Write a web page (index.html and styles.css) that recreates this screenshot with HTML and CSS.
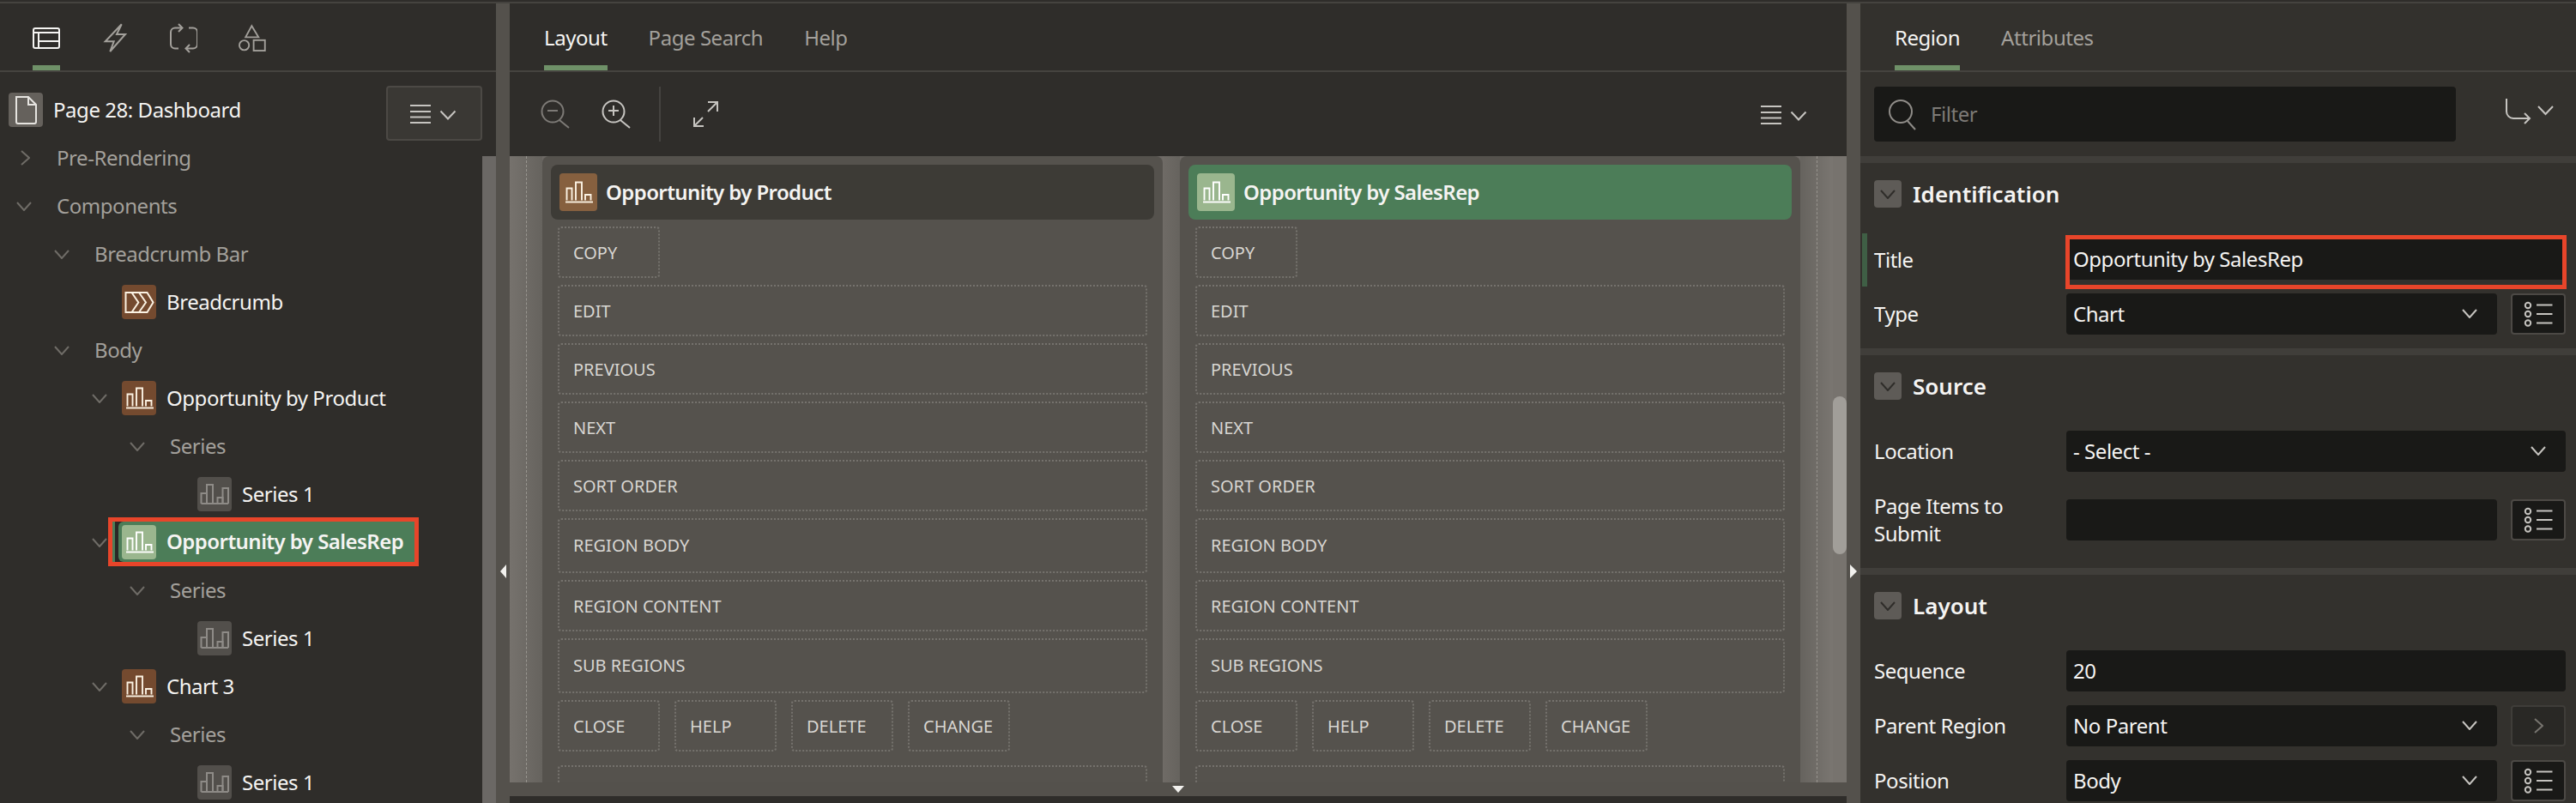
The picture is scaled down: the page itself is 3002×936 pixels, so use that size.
FILE: index.html
```html
<!DOCTYPE html>
<html lang="en">
<head>
  <meta charset="UTF-8" />
  <title>Page Designer</title>
  <link rel="stylesheet" href="styles.css">
</head>
<body>

  <svg class="sprites" width="0" height="0">
    <symbol id="chev-down" viewBox="0 0 18 11"><path d="M1 1l8 9 8-9" fill="none" stroke="currentColor" stroke-width="2"/></symbol>
    <symbol id="chev-right" viewBox="0 0 11 18"><path d="M1 1l9 8-9 8" fill="none" stroke="currentColor" stroke-width="2"/></symbol>
    <symbol id="chart" viewBox="0 0 40 40">
      <g fill="none" stroke="currentColor" stroke-width="1.9">
        <path d="M6.5 29.500V15.500H12.500V29.500"/>
        <path d="M17 29.500V8.500H24V29.500"/>
        <path d="M28 29.500V23H34.500V29.500"/>
        <path d="M5 31.500H37"/>
      </g>
    </symbol>
    <symbol id="series" viewBox="0 0 40 40">
      <g fill="none" stroke="currentColor" stroke-width="2">
        <path d="M4.500 31V19H11V31"/>
        <path d="M11 31V9H18V31"/>
        <path d="M23.500 31V24H29.500V31"/>
        <path d="M29.500 31V13H36V31"/>
        <path d="M4.500 31H36"/>
      </g>
    </symbol>
    <symbol id="menu" viewBox="0 0 56 40">
      <g fill="none" stroke="currentColor" stroke-width="2">
        <path d="M0 11H24M0 18H24M0 24.500H24M0 31H24"/>
        <path d="M35.500 17.500L44 26.500L52.500 17.500"/>
      </g>
    </symbol>
    <symbol id="list" viewBox="0 0 60 44">
      <g fill="none" stroke="currentColor" stroke-width="2">
        <circle cx="18" cy="12" r="3.200"/>
        <circle cx="18" cy="22" r="3.200"/>
        <circle cx="18" cy="32.500" r="3.200"/>
        <path d="M28 11.500H46.500M28 22H46.500M28 32.500H46.500"/>
      </g>
    </symbol>
  </svg>

  <div class="top-line"></div>

  <div class="designer">

    <!-- left: page tree -->
    <section class="pane">
      <div class="tabs tabs-left">
        <div class="tab-icon is-active">
          <svg width="32" height="40" viewBox="0 0 32 40" fill="none" stroke="currentColor" stroke-width="2">
            <rect x="1" y="9" width="30" height="23" rx="2"/>
            <path d="M1 14H31M7 14V32M7 24H31"/>
          </svg>
        </div>
        <div class="tab-icon">
          <svg width="32" height="40" viewBox="0 0 32 40" fill="none" stroke="currentColor" stroke-width="2">
            <path d="M23.700 4.300L4.700 24.300H14.700L10.300 36L28 16H18Z"/>
          </svg>
        </div>
        <div class="tab-icon">
          <svg width="32" height="40" viewBox="0 0 32 40" fill="none" stroke="currentColor" stroke-width="2">
            <path d="M14 8.500H6a5 5 0 0 0-5 5v14a5 5 0 0 0 5 5H10"/>
            <path d="M19 32.500H27a5 5 0 0 0 5-5V13.500a5 5 0 0 0-5-5H22"/>
            <path d="M10 4l4.500 4.500L10 13M23 28l-4.500 4.500L23 37"/>
          </svg>
        </div>
        <div class="tab-icon">
          <svg width="34" height="40" viewBox="0 0 34 40" fill="none" stroke="currentColor" stroke-width="2">
            <path d="M16.300 5.300L8.700 19.300H24.700Z"/>
            <circle cx="7" cy="29.300" r="6"/>
            <rect x="18.700" y="23" width="14" height="13"/>
          </svg>
        </div>
      </div>

      <div class="tree-wrap">
        <div class="tree">
          <div class="page-row">
            <span class="tile tile-page">
              <svg width="40" height="40" viewBox="0 0 40 40" fill="none" stroke="currentColor" stroke-width="2">
                <path d="M9 5H23L32 14V34a2 2 0 0 1-2 2H11a2 2 0 0 1-2-2Z"/>
                <path d="M23 5V14H32"/>
              </svg>
            </span>
            <span class="page-name">Page 28: Dashboard</span>
            <button class="menu-btn"><svg width="56" height="40"><use href="#menu"/></svg></button>
          </div>

          <div class="row level-0"><svg class="chev chev-r" width="18" height="18"><use href="#chev-right" x="5" width="11" height="18"/></svg><span class="group">Pre-Rendering</span></div>
          <div class="row level-0"><svg class="chev" width="18" height="11"><use href="#chev-down"/></svg><span class="group">Components</span></div>
          <div class="row level-1"><svg class="chev" width="18" height="11"><use href="#chev-down"/></svg><span class="group">Breadcrumb Bar</span></div>
          <div class="row level-2">
            <span class="chev"></span>
            <span class="tile tile-brown">
              <svg width="40" height="40" viewBox="0 0 40 40" fill="none" stroke="currentColor" stroke-width="2">
                <path d="M4.500 9H29.500L36.500 20.500L29.500 32H4.500Z"/>
                <path d="M11.500 9L19.300 20.500L11.500 32M20 9L28 20.500L20 32"/>
              </svg>
            </span>
            <span class="item">Breadcrumb</span>
          </div>
          <div class="row level-1"><svg class="chev" width="18" height="11"><use href="#chev-down"/></svg><span class="group">Body</span></div>
          <div class="row level-2">
            <svg class="chev" width="18" height="11"><use href="#chev-down"/></svg>
            <span class="tile tile-brown"><svg width="40" height="40"><use href="#chart"/></svg></span>
            <span class="item">Opportunity by Product</span>
          </div>
          <div class="row level-3"><svg class="chev" width="18" height="11"><use href="#chev-down"/></svg><span class="group">Series</span></div>
          <div class="row level-4">
            <span class="chev"></span>
            <span class="tile tile-grey"><svg width="40" height="40"><use href="#series"/></svg></span>
            <span class="item">Series 1</span>
          </div>
          <div class="row level-2">
            <svg class="chev" width="18" height="11"><use href="#chev-down"/></svg>
            <div class="selected">
              <div class="selected-inner">
                <span class="tile tile-green"><svg width="40" height="40"><use href="#chart"/></svg></span>
                <span class="item item-bold">Opportunity by SalesRep</span>
              </div>
            </div>
          </div>
          <div class="row level-3"><svg class="chev" width="18" height="11"><use href="#chev-down"/></svg><span class="group">Series</span></div>
          <div class="row level-4">
            <span class="chev"></span>
            <span class="tile tile-grey"><svg width="40" height="40"><use href="#series"/></svg></span>
            <span class="item">Series 1</span>
          </div>
          <div class="row level-2">
            <svg class="chev" width="18" height="11"><use href="#chev-down"/></svg>
            <span class="tile tile-brown"><svg width="40" height="40"><use href="#chart"/></svg></span>
            <span class="item">Chart 3</span>
          </div>
          <div class="row level-3"><svg class="chev" width="18" height="11"><use href="#chev-down"/></svg><span class="group">Series</span></div>
          <div class="row level-4">
            <span class="chev"></span>
            <span class="tile tile-grey"><svg width="40" height="40"><use href="#series"/></svg></span>
            <span class="item">Series 1</span>
          </div>
        </div>
        <div class="tree-scroll"></div>
      </div>
    </section>

    <div class="splitter"><span class="arrow-left"></span></div>

    <!-- center: layout -->
    <section class="pane pane-center">
      <div class="tabs tabs-center">
        <div class="tab is-active">Layout</div>
        <div class="tab">Page Search</div>
        <div class="tab">Help</div>
      </div>

      <div class="toolbar">
        <svg class="tool tool-dim" width="40" height="40" viewBox="0 0 40 40" fill="none" stroke="currentColor" stroke-width="2">
          <circle cx="18" cy="17" r="12.500"/>
          <path d="M26 27L37 36M12 16H24"/>
        </svg>
        <svg class="tool" width="40" height="40" viewBox="0 0 40 40" fill="none" stroke="currentColor" stroke-width="2">
          <circle cx="17" cy="17" r="12.500"/>
          <path d="M25 27L36 36M11 16H23M17 10V22"/>
        </svg>
        <span class="tool-sep"></span>
        <svg class="tool" width="40" height="40" viewBox="0 0 40 40" fill="none" stroke="currentColor" stroke-width="2">
          <path d="M7 34L17 24M7 24V34H18M34 6L23 17M23 6H34V17"/>
        </svg>
        <svg class="tool tool-menu" width="56" height="40"><use href="#menu"/></svg>
      </div>

      <div class="canvas">
        <div class="strip"><span class="strip-line"></span></div>

        <div class="region-col">
          <div class="region-head">
            <span class="tile tile-head"><svg width="40" height="40"><use href="#chart"/></svg></span>
            <span class="region-name">Opportunity by Product</span>
          </div>
          <div class="slots">
            <div class="slot slot-small">COPY</div>
            <div class="slot">EDIT</div>
            <div class="slot">PREVIOUS</div>
            <div class="slot">NEXT</div>
            <div class="slot">SORT ORDER</div>
            <div class="slot slot-tall">REGION BODY</div>
            <div class="slot">REGION CONTENT</div>
            <div class="slot slot-tall">SUB REGIONS</div>
            <div class="slot-row">
              <div class="slot slot-small">CLOSE</div>
              <div class="slot slot-small">HELP</div>
              <div class="slot slot-small">DELETE</div>
              <div class="slot slot-small">CHANGE</div>
            </div>
            <div class="slot slot-last"></div>
          </div>
        </div>

        <div class="col-gap"></div>

        <div class="region-col">
          <div class="region-head is-current">
            <span class="tile tile-head-green"><svg width="40" height="40"><use href="#chart"/></svg></span>
            <span class="region-name">Opportunity by SalesRep</span>
          </div>
          <div class="slots">
            <div class="slot slot-small">COPY</div>
            <div class="slot">EDIT</div>
            <div class="slot">PREVIOUS</div>
            <div class="slot">NEXT</div>
            <div class="slot">SORT ORDER</div>
            <div class="slot slot-tall">REGION BODY</div>
            <div class="slot">REGION CONTENT</div>
            <div class="slot slot-tall">SUB REGIONS</div>
            <div class="slot-row">
              <div class="slot slot-small">CLOSE</div>
              <div class="slot slot-small">HELP</div>
              <div class="slot slot-small">DELETE</div>
              <div class="slot slot-small">CHANGE</div>
            </div>
            <div class="slot slot-last"></div>
          </div>
        </div>

        <div class="strip strip-right"><span class="strip-line"></span></div>
        <div class="canvas-scroll"><span class="canvas-thumb"></span></div>
      </div>

      <div class="bottom-bar"><span class="arrow-down"></span></div>
      <div class="bottom-edge"></div>
    </section>

    <div class="splitter"><span class="arrow-right"></span></div>

    <!-- right: properties -->
    <section class="pane pane-props">
      <div class="tabs tabs-props">
        <div class="tab is-active">Region</div>
        <div class="tab">Attributes</div>
      </div>

      <div class="filter-row">
        <div class="filter">
          <svg width="40" height="40" viewBox="0 0 40 40" fill="none" stroke="currentColor" stroke-width="2">
            <circle cx="17" cy="17" r="13"/>
            <path d="M25 28L34 38"/>
          </svg>
          <span class="filter-text">Filter</span>
        </div>
        <svg class="goto" width="60" height="40" viewBox="0 0 60 40" fill="none" stroke="currentColor" stroke-width="2">
          <path d="M2 2V17a8 8 0 0 0 8 8H29M23 19l6 6-6 6"/>
          <path d="M39 11L47.500 20L56 11"/>
        </svg>
      </div>

      <div class="section">
        <div class="section-head">
          <span class="toggle"><svg width="18" height="11"><use href="#chev-down"/></svg></span>
          <h3>Identification</h3>
        </div>
        <div class="prop prop-title">
          <span class="changed-bar"></span>
          <label class="prop-label title-label">Title</label>
          <div class="title-box"><div class="title-input">Opportunity by SalesRep</div></div>
        </div>
        <div class="prop prop-type">
          <label class="prop-label">Type</label>
          <div class="field">Chart<svg width="18" height="11"><use href="#chev-down"/></svg></div>
          <button class="field-btn"><svg width="60" height="44"><use href="#list"/></svg></button>
        </div>
      </div>

      <div class="section section-source">
        <div class="section-head">
          <span class="toggle"><svg width="18" height="11"><use href="#chev-down"/></svg></span>
          <h3>Source</h3>
        </div>
        <div class="prop prop-first">
          <label class="prop-label">Location</label>
          <div class="field field-wide">- Select -<svg width="18" height="11"><use href="#chev-down"/></svg></div>
        </div>
        <div class="prop prop-items">
          <label class="prop-label">Page Items to Submit</label>
          <div class="field"></div>
          <button class="field-btn"><svg width="60" height="44"><use href="#list"/></svg></button>
        </div>
      </div>

      <div class="section">
        <div class="section-head">
          <span class="toggle"><svg width="18" height="11"><use href="#chev-down"/></svg></span>
          <h3>Layout</h3>
        </div>
        <div class="prop prop-first">
          <label class="prop-label">Sequence</label>
          <div class="field field-wide">20</div>
        </div>
        <div class="prop prop-next">
          <label class="prop-label">Parent Region</label>
          <div class="field">No Parent<svg width="18" height="11"><use href="#chev-down"/></svg></div>
          <button class="field-btn field-btn-dim"><svg width="11" height="18"><use href="#chev-right"/></svg></button>
        </div>
        <div class="prop prop-next">
          <label class="prop-label">Position</label>
          <div class="field">Body<svg width="18" height="11"><use href="#chev-down"/></svg></div>
          <button class="field-btn"><svg width="60" height="44"><use href="#list"/></svg></button>
        </div>
      </div>
    </section>

  </div>

</body>
</html>
```

FILE: styles.css
```css
* {
  box-sizing: border-box;
}

html, body {
  height: 100%;
}

body {
  margin: 0;
  overflow: hidden;
  background-color: #2f2d2a;
  color: #f5f4f2;
  font-family: "Noto Sans", "Open Sans", sans-serif;
  font-size: 24px;
  letter-spacing: -0.45px;
}

.sprites {
  position: absolute;
}

.top-line {
  height: 4px;
  border-top: 2px solid #2f2d2a;
  background-color: #45433f;
}

.designer {
  display: grid;
  grid-template-columns: 578px 16px 1558px 16px 834px;
  height: 932px;
}

.pane {
  display: flex;
  flex-direction: column;
  min-width: 0;
  overflow: hidden;
  background-color: #2f2d2a;
}

.pane-props {
  background-color: #33312d;
}

/* splitters */
.splitter {
  display: flex;
  justify-content: center;
  padding-top: 654px;
  background-color: #54514c;
}

.arrow-left, .arrow-right {
  width: 0;
  height: 0;
  border-top: 8px solid transparent;
  border-bottom: 8px solid transparent;
}

.arrow-left {
  border-right: 7px solid #f2f1ee;
}

.arrow-right {
  border-left: 8px solid #f2f1ee;
}

/* tabs */
.tabs {
  display: flex;
  flex: none;
  height: 80px;
  border-bottom: 2px solid #45433f;
}

.tabs-left {
  gap: 48px;
  padding-left: 38px;
}

.tabs-center {
  gap: 48px;
  padding-left: 40px;
}

.tabs-props {
  gap: 48px;
  padding-left: 40px;
}

.tab, .tab-icon {
  border-bottom: 6px solid transparent;
  color: #a3a09b;
}

.tab {
  display: flex;
  align-items: center;
  padding-top: 6px;
}

.tab-icon {
  display: flex;
  align-items: center;
  width: 32px;
  padding-top: 8px;
}

.tab.is-active, .tab-icon.is-active {
  border-bottom-color: #6f9168;
  color: #f5f4f2;
}

/* tree */
.tree-wrap {
  display: flex;
  flex: 1;
  min-height: 0;
}

.tree {
  flex: 1;
  min-width: 0;
  padding-top: 16px;
}

.tree-scroll {
  flex: none;
  width: 16px;
  margin-top: 98px;
  background-color: #6b6865;
}

.page-row {
  display: flex;
  align-items: center;
  height: 56px;
  padding-left: 10px;
  padding-right: 0;
}

.page-name {
  margin-left: 12px;
  padding-bottom: 2px;
}

.menu-btn {
  display: flex;
  align-items: center;
  justify-content: center;
  align-self: flex-start;
  width: 112px;
  height: 64px;
  margin-left: auto;
  padding: 0;
  background-color: #3a3834;
  border: 2px solid #4c4945;
  border-radius: 4px;
  color: #c6c4c0;
}

.row {
  display: flex;
  align-items: center;
  height: 56px;
  white-space: nowrap;
}

.level-0 { padding-left: 19px; }
.level-1 { padding-left: 63px; }
.level-2 { padding-left: 107px; }
.level-3 { padding-left: 151px; }
.level-4 { padding-left: 195px; }

.chev {
  flex: none;
  width: 18px;
  color: #6f6c67;
}

.chev + .group {
  margin-left: 29px;
}

.chev + .tile {
  margin-left: 17px;
}

.group {
  padding-bottom: 2px;
  color: #a3a09b;
}

.item {
  padding-bottom: 2px;
}

.tile {
  display: flex;
  flex: none;
  width: 40px;
  height: 40px;
  border-radius: 4px;
}

.tile + .item {
  margin-left: 12px;
}

.tile-page {
  background-color: #65615c;
  color: #e6e4e0;
}

.tile-brown {
  background-color: #744a2f;
  color: #fbf2e3;
}

.tile-grey {
  background-color: #524f4b;
  color: #8e8b87;
}

.tile-green {
  background-color: #9ab68e;
  color: #fff;
}

.item-bold {
  font-weight: 600;
  letter-spacing: -0.55px;
}

/* selected tree node, with the red call-out round it */
.selected {
  display: flex;
  flex: none;
  width: 362px;
  height: 57px;
  margin-top: -1px;
  margin-left: 1px;
  border: 5px solid #e8452a;
  background-color: #2a2826;
}

.selected::before {
  content: "";
  width: 3px;
  margin-right: 4px;
  background-color: #4c7d58;
}

.selected-inner {
  display: flex;
  flex: 1;
  align-items: center;
  padding-left: 4px;
  border-radius: 6px 0 0 6px;
  background-color: #4c7d58;
}

/* layout toolbar */
.toolbar {
  display: flex;
  flex: none;
  align-items: center;
  height: 98px;
  padding-left: 32px;
  padding-right: 44px;
}

.tool {
  flex: none;
  color: #c6c4c0;
}

.tool-dim {
  margin-right: 32px;
  color: #7d7a76;
}

.tool-sep {
  width: 2px;
  height: 64px;
  margin-left: 30px;
  margin-right: 32px;
  background-color: #45433f;
}

.tool-menu {
  margin-left: auto;
}

/* layout canvas */
.canvas {
  display: flex;
  flex: none;
  height: 730px;
  overflow: hidden;
  background-color: #6d6965;
}

.strip {
  flex: none;
  width: 38px;
  background: linear-gradient(to right, #76726d, #66635e);
}

.strip-right {
  background: linear-gradient(to right, #66635e, #7a7671);
}

.strip-line {
  display: block;
  width: 20px;
  height: 100%;
  border-right: 1px dashed #98958f;
}

.col-gap {
  flex: none;
  width: 20px;
  background: linear-gradient(to right, #6f6b66, #66635e);
}

.canvas-scroll {
  flex: none;
  width: 16px;
  padding-top: 280px;
  background-color: #77736e;
}

.canvas-thumb {
  display: block;
  height: 184px;
  border-radius: 8px;
  background-color: #a19e99;
}

.region-col {
  flex: none;
  width: 723px;
  border-radius: 8px 8px 0 0;
  padding: 10px 10px 0;
  background-color: #55524d;
}

.region-head {
  display: flex;
  align-items: center;
  height: 64px;
  padding-left: 10px;
  border-radius: 8px;
  background-color: #3d3b36;
}

.region-head.is-current {
  background-color: #4c7d58;
}

.region-head .tile {
  width: 44px;
  height: 44px;
  justify-content: center;
  align-items: center;
}

.tile-head {
  background-color: #86603f;
  color: #fbf2e3;
}

.tile-head-green {
  background-color: #9ab68e;
  color: #fff;
}

.region-name {
  margin-left: 10px;
  padding-bottom: 2px;
  font-weight: 600;
  letter-spacing: -0.6px;
  white-space: nowrap;
}

.slots {
  display: flex;
  flex-direction: column;
  gap: 8px;
  padding: 8px 8px 0;
}

.slot {
  display: flex;
  flex: none;
  align-items: center;
  height: 60px;
  padding-left: 16px;
  border: 2px dotted #75726d;
  border-radius: 4px;
  color: #d8d6d2;
  font-size: 20px;
  letter-spacing: 0;
}

.slot-small {
  width: 119px;
}

.slot-tall {
  height: 64px;
  padding-bottom: 2px;
}

.slot-row {
  display: flex;
  gap: 17px;
}

.slot-last {
  height: 60px;
  margin-top: 8px;
}

/* bottom of center pane */
.bottom-bar {
  display: flex;
  flex: none;
  justify-content: center;
  align-items: center;
  height: 16px;
  background-color: #54514c;
}

.arrow-down {
  width: 0;
  height: 0;
  border-left: 7px solid transparent;
  border-right: 7px solid transparent;
  border-top: 8px solid #f2f1ee;
}

.bottom-edge {
  flex: 1;
}

/* property editor */
.filter-row {
  display: flex;
  flex: none;
  align-items: center;
  height: 98px;
  padding-left: 16px;
}

.filter {
  display: flex;
  align-items: center;
  width: 678px;
  height: 64px;
  padding-left: 14px;
  border-radius: 4px;
  background-color: #191917;
  color: #8f8c88;
}

.filter-text {
  margin-left: 12px;
  padding-bottom: 2px;
  color: #7d7a76;
}

.goto {
  margin-left: 57px;
  color: #c6c4c0;
}

.section {
  flex: none;
  padding: 20px 12px 16px 16px;
  border-top: 8px solid #403e3a;
}

.section-source {
  padding-bottom: 32px;
}

.section-head {
  display: flex;
  align-items: center;
  height: 32px;
}

.section-head h3 {
  margin: 0 0 0 13px;
  font-size: 26px;
  font-weight: 600;
  letter-spacing: 0;
}

.toggle {
  display: flex;
  align-items: center;
  justify-content: center;
  width: 32px;
  height: 32px;
  border-radius: 4px;
  background-color: #5e5b57;
  color: #2f2d2a;
}

.prop {
  display: flex;
  align-items: center;
  gap: 16px;
}

.prop-label {
  flex: none;
  width: 208px;
  line-height: 32px;
}

.title-label {
  padding-bottom: 6px;
}

.prop-title {
  height: 63px;
  margin-top: 32px;
  margin-left: -14px;
}

.changed-bar {
  flex: none;
  align-self: flex-start;
  width: 6px;
  height: 62px;
  margin-top: -2px;
  margin-right: -8px;
  background-color: #3f5f45;
}

.title-box {
  flex: none;
  width: 584px;
  height: 63px;
  margin-left: -1px;
  border: 5px solid #e8452a;
}

.title-input {
  display: flex;
  align-items: center;
  height: 47px;
  padding-left: 4px;
  padding-bottom: 2px;
  background-color: #191917;
}

.prop-type {
  margin-top: 5px;
}

.prop-first {
  margin-top: 36px;
}

.prop-items {
  height: 48px;
  margin-top: 32px;
}

.prop-next {
  margin-top: 16px;
}

.field {
  display: flex;
  flex: none;
  align-items: center;
  justify-content: space-between;
  width: 502px;
  height: 48px;
  padding: 0 23px 2px 8px;
  border-radius: 4px;
  background-color: #191917;
}

.field svg {
  color: #c6c4c0;
}

.field-wide {
  width: 582px;
}

.field-btn {
  display: flex;
  flex: none;
  align-items: center;
  justify-content: center;
  width: 64px;
  height: 48px;
  padding: 0;
  border: 2px solid #4c4945;
  border-radius: 4px;
  background-color: #191917;
  color: #c6c4c0;
}

.field-btn-dim {
  background-color: #292825;
  border-color: #3f3d39;
  color: #77746f;
}
```
